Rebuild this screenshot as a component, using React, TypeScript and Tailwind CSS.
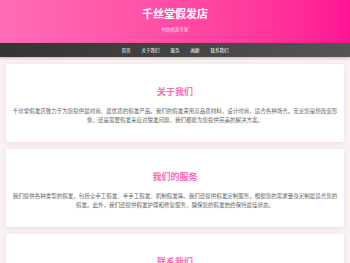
import React from "react";

const navLinks: string[] = ["首页", "关于我们", "服务", "画廊", "联系我们"];

const sections: { title: string; body: string }[] = [
  {
    title: "关于我们",
    body: "千丝堂假发店致力于为您提供最时尚、最优质的假发产品。我们的假发采用高品质材料，设计时尚，适合各种场合。无论您是想改变形象，还是需要假发来应对脱发问题，我们都能为您提供完美的解决方案。",
  },
  {
    title: "我们的服务",
    body: "我们提供各种类型的假发，包括全手工假发、半手工假发、机制假发等。我们还提供假发定制服务，根据您的需求量身定制最适合您的假发。此外，我们还提供假发护理和修复服务，确保您的假发始终保持最佳状态。",
  },
  {
    title: "联系我们",
    body: "如果您对我们的产品或服务有任何疑问，欢迎随时联系我们。我们的客服团队将竭诚为您服务。",
  },
];

const App: React.FC = () => {
  return (
    <div
      className="min-h-screen bg-[#faf2f2] text-[#555]"
      style={{ fontFamily: '"Noto Sans CJK SC", "Noto Sans", sans-serif' }}
    >
      {/* Header */}
      <header className="h-[43px] bg-gradient-to-r from-[#ff6cb5] to-[#ff1493] flex flex-col items-center pt-[6px]">
        <h1 className="text-[11px] leading-[15px] font-bold text-white">千丝堂假发店</h1>
        <p className="text-[4.5px] leading-[6px] mt-[5px] text-[#ffe0f0]">时尚假发专家</p>
      </header>

      {/* Nav */}
      <nav className="h-[14px] bg-gradient-to-r from-[#333] to-[#555] shadow-[0_1px_3px_rgba(0,0,0,0.25)]">
        <ul className="flex justify-center items-center h-full gap-[1px]">
          {navLinks.map((link) => (
            <li key={link}>
              <a href="#" className="block px-[5px] text-[4.5px] leading-[14px] text-white">
                {link}
              </a>
            </li>
          ))}
        </ul>
      </nav>

      {/* Sections */}
      <main className="px-[6px] pt-[7px] flex flex-col gap-[7px]">
        {sections.map((s) => (
          <section
            key={s.title}
            className="bg-white rounded-[3px] shadow-[0_1px_4px_rgba(230,180,190,0.45)] px-[6px] pt-[22px] pb-[17px] text-center"
          >
            <h2 className="text-[9px] leading-[12px] font-bold text-[#ff69b4]">{s.title}</h2>
            <p className="mt-[9px] text-[5.5px] leading-[9px] text-[#666]">{s.body}</p>
          </section>
        ))}
      </main>
    </div>
  );
};

export default App;
